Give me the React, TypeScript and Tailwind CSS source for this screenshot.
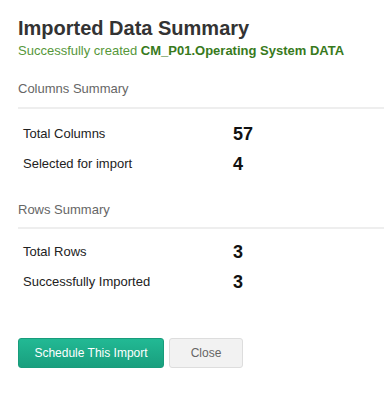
const COLUMN_STATS = [
  { label: "Total Columns", value: 57 },
  { label: "Selected for import", value: 4 },
];

const ROW_STATS = [
  { label: "Total Rows", value: 3 },
  { label: "Successfully Imported", value: 3 },
];

function SummarySection({
  title,
  stats,
  className,
  headClass,
  listClass,
}: {
  title: string;
  stats: { label: string; value: number }[];
  className?: string;
  headClass?: string;
  listClass?: string;
}) {
  return (
    <section className={className}>
      <h3 className={`border-b-2 border-[#eeeeee] text-[13px] leading-[18px] text-[#666666] ${headClass ?? ""}`}>
        {title}
      </h3>
      <div className={listClass}>
        {stats.map((s) => (
          <div key={s.label} className="flex h-[30px] items-center pl-[5px]">
            <span className="w-[210px] text-[13px] text-[#222222]">{s.label}</span>
            <span className="text-[18px] font-bold leading-none text-[#111111]">{s.value}</span>
          </div>
        ))}
      </div>
    </section>
  );
}

export default function App() {
  return (
    <div
      className="h-[400px] w-[384px] bg-white pl-[18px] pt-[16px]"
      style={{ fontFamily: '"Liberation Sans", Arial, sans-serif' }}
    >
      <h2 className="text-[20px] font-bold leading-[24px] text-[#333333]">Imported Data Summary</h2>
      <p className="mt-[2px] text-[13px] leading-[18px] text-[#56973a]">
        Successfully created <b className="font-bold text-[#387a1c]">CM_P01.Operating System DATA</b>
      </p>

      <SummarySection
        title="Columns Summary"
        stats={COLUMN_STATS}
        className="mt-[20px]"
        headClass="pb-[9px]"
        listClass="mt-[10px]"
      />
      <SummarySection
        title="Rows Summary"
        stats={ROW_STATS}
        className="mt-[22px]"
        headClass="pb-[8px]"
        listClass="mt-[8px]"
      />

      <div className="mt-[41px] flex gap-[5px]">
        <button
          type="button"
          className="h-[30px] w-[146px] rounded-[3px] border border-[#189c7b] bg-gradient-to-b from-[#22b994] to-[#199f7e] text-[12px] text-white"
        >
          Schedule This Import
        </button>
        <button
          type="button"
          className="h-[30px] w-[74px] rounded-[3px] border border-[#dddddd] bg-[#f2f2f2] text-[12px] text-[#666666]"
        >
          Close
        </button>
      </div>
    </div>
  );
}
